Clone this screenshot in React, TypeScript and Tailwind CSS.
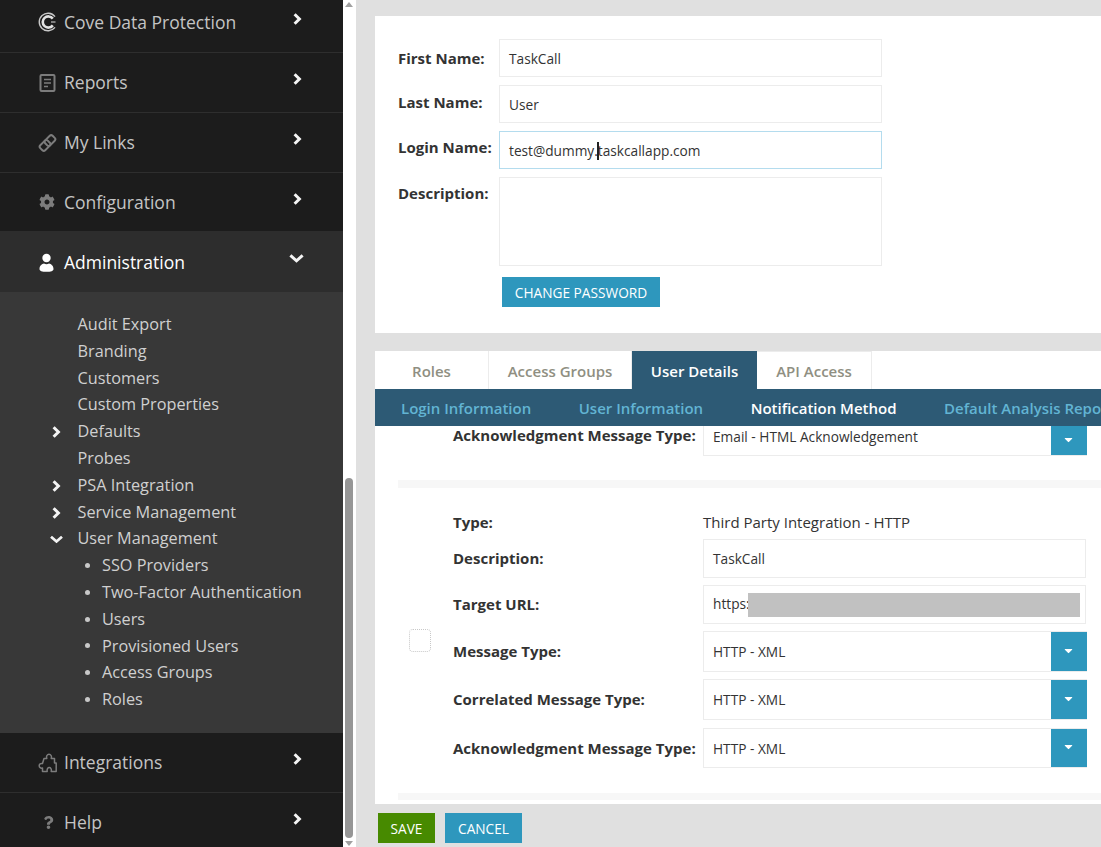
import { FaCog, FaCaretDown, FaQuestion } from 'react-icons/fa'
import type { ReactNode } from 'react'

const CoveIcon = () => (
  <svg width="20" height="20" viewBox="0 0 20 20" fill="none" stroke="#c8c8c8">
    <path d="M17 4.6 A8.8 8.8 0 1 0 17 15.4" strokeWidth="1.4" />
    <path d="M14.8 6.6 A5.6 5.6 0 1 0 14.8 13.4" strokeWidth="2.6" stroke="#e2e2e2" />
    <path d="M13 10 H17.5" strokeWidth="1.4" stroke="#a8a8a8" />
  </svg>
)

const ReportIcon = () => (
  <svg width="20" height="20" viewBox="0 0 20 20" fill="none">
    <rect x="2.5" y="2" width="14" height="16" rx="1" stroke="#7c7c7c" strokeWidth="2" />
    <path d="M6 6.5 H13 M6 10 H13 M6 13.5 H10" stroke="#7c7c7c" strokeWidth="1.5" />
  </svg>
)

const LinkIcon = () => (
  <svg width="20" height="20" viewBox="0 0 20 20" fill="none" stroke="#7c7c7c" strokeWidth="2">
    <g transform="rotate(-45 9.5 10)">
      <rect x="0.8" y="6.5" width="10.5" height="7" rx="2" />
      <rect x="7.7" y="6.5" width="10.5" height="7" rx="2" />
    </g>
  </svg>
)

const UserIcon = () => (
  <svg width="18" height="20" viewBox="0 0 18 20" fill="#ffffff">
    <circle cx="8.5" cy="5" r="4.2" />
    <path d="M1.5 16 C1.5 12.5 4 11 6 10.5 C7.5 11.5 9.5 11.5 11 10.5 C13 11 15.5 12.5 15.5 16 C15.5 18 13 18.8 8.5 18.8 C4 18.8 1.5 18 1.5 16 Z" />
  </svg>
)

const PuzzleIcon = () => (
  <svg width="20" height="20" viewBox="0 0 20 20" fill="none" stroke="#7c7c7c" strokeWidth="1.5">
    <path d="M6 5.5 H8.8 C8 3.2 9.2 1.2 11 1.2 C12.8 1.2 14 3.2 13.2 5.5 H16.5 V10 H18.2 V18.5 H13.2 C13.8 15.8 12.6 14.6 11.2 14.6 C9.8 14.6 8.8 15.8 9.2 18.5 H4.5 V15 C2.6 15.6 1.2 14.4 1.2 12.8 C1.2 11.2 2.6 10 4.5 10.5 L6 5.5 Z" strokeLinejoin="round" />
  </svg>
)

const ChevronRight = ({ className }: { className: string }) => (
  <svg width="9" height="12" viewBox="0 0 9 12" fill="none" stroke="#f4f4f4" strokeWidth="3" className={className}>
    <path d="M1.6 1.2 L6.4 6 L1.6 10.8" />
  </svg>
)

const ChevronDown = ({ className }: { className: string }) => (
  <svg width="15" height="9" viewBox="0 0 15 9" fill="none" stroke="#f4f4f4" strokeWidth="3" className={className}>
    <path d="M1.4 1.4 L7.5 6.8 L13.6 1.4" />
  </svg>
)

type RowProps = { icon: ReactNode; label: string; className: string }

const NavRow = ({ icon, label, className }: RowProps) => (
  <div className={`flex items-center pl-[38px] pr-[41px] border-b border-[#2e2e2e] text-[17.5px] text-[#c4c4c4] ${className}`}>
    <span className="w-[26px] flex items-center">{icon}</span>
    <span className="flex-1">{label}</span>
    <ChevronRight className="-mt-[7px]" />
  </div>
)

const SubItem = ({ label, arrow }: { label: string; arrow?: 'right' | 'down' }) => (
  <div className="flex items-center h-[26.8px] text-[16.25px] text-[#d0d0d0]">
    <span className="w-[77.5px] flex pl-[50px]">
      {arrow === 'right' && <ChevronRight className="ml-[2px] mt-[2px]" />}
      {arrow === 'down' && <ChevronDown className="-ml-[1px] mt-[2px] scale-90" />}
    </span>
    {label}
  </div>
)

const Bullet = ({ label }: { label: string }) => (
  <div className="flex items-center h-[26.8px] pl-[85px] text-[16.25px] text-[#d0d0d0]">
    <span className="w-[5px] h-[5px] rounded-full bg-[#c8c8c8] mr-[12px]" />
    {label}
  </div>
)

const TextBox = ({ value, className }: { value: string; className: string }) => (
  <div className={`flex items-center pl-[9px] pt-[2px] border border-[#ececec] bg-white text-[13.7px] text-[#333333] ${className}`}>
    {value}
  </div>
)

const Select = ({ value, className }: { value: string; className: string }) => (
  <div className={`relative flex items-center w-[384px] pl-[9px] pt-[2px] border border-[#ececec] bg-white text-[13.7px] text-[#333333] ${className}`}>
    {value}
    <span className="absolute -right-[1px] top-0 bottom-0 w-[36px] bg-[#2e97bd] flex items-center justify-center">
      <FaCaretDown size={13} className="text-white -mt-[3px] -ml-[2px]" />
    </span>
  </div>
)

const FormRow = ({ label, children, className }: { label: string; children: ReactNode; className: string }) => (
  <div className={`flex items-center ${className}`}>
    <span className="w-[250px] font-bold text-[15px] text-[#333333] whitespace-nowrap">{label}</span>
    {children}
  </div>
)

export default function App() {
  return (
    <div className="flex h-[847px] w-[1101px] overflow-hidden bg-[#e0e0e0] font-['Open_Sans',sans-serif]">
      <div className="w-[343px] shrink-0 flex flex-col bg-[#1c1c1c]">
        <NavRow icon={<CoveIcon />} label="Cove Data Protection" className="h-[53px] pb-[8px]" />
        <NavRow icon={<ReportIcon />} label="Reports" className="h-[60px]" />
        <NavRow icon={<LinkIcon />} label="My Links" className="h-[60px]" />
        <NavRow icon={<FaCog size={16} className="text-[#7c7c7c] ml-[1px]" />} label="Configuration" className="h-[58px] border-b-0" />
        <div className="h-[61px] flex items-center pl-[38px] pr-[39px] bg-[#2d2d2d] text-[17.5px] text-white pt-[2px]">
          <span className="w-[26px] flex items-center"><UserIcon /></span>
          <span className="flex-1">Administration</span>
          <ChevronDown className="-mt-[9px]" />
        </div>
        <div className="h-[441px] bg-[#383838] pt-[18.9px]">
          <SubItem label="Audit Export" />
          <SubItem label="Branding" />
          <SubItem label="Customers" />
          <SubItem label="Custom Properties" />
          <SubItem label="Defaults" arrow="right" />
          <SubItem label="Probes" />
          <SubItem label="PSA Integration" arrow="right" />
          <SubItem label="Service Management" arrow="right" />
          <SubItem label="User Management" arrow="down" />
          <Bullet label="SSO Providers" />
          <Bullet label="Two-Factor Authentication" />
          <Bullet label="Users" />
          <Bullet label="Provisioned Users" />
          <Bullet label="Access Groups" />
          <Bullet label="Roles" />
        </div>
        <NavRow icon={<PuzzleIcon />} label="Integrations" className="h-[60px]" />
        <NavRow icon={<FaQuestion size={13} className="text-[#7c7c7c] ml-[4px]" />} label="Help" className="flex-1 border-b-0 pt-[5px]" />
      </div>

      <div className="relative w-[13px] shrink-0 bg-white">
        <span className="absolute left-[2px] top-[2px] w-0 h-0 border-x-[4px] border-x-transparent border-b-[5px] border-b-[#a0a0a0]" />
        <span className="absolute left-[2px] top-[478px] w-[8px] h-[360px] rounded-[4px] bg-[#969696]" />
        <span className="absolute left-[2px] bottom-[1px] w-0 h-0 border-x-[4px] border-x-transparent border-t-[5px] border-t-[#a0a0a0]" />
      </div>

      <div className="flex-1 min-w-0 pl-[19px] pt-[16px] flex flex-col">
        <div className="h-[317px] bg-white pt-[23px] pl-[23px] shrink-0">
          <div className="flex items-center h-[38px] mb-[8px]">
            <span className="w-[101px] font-bold text-[15px] text-[#333333]">First Name:</span>
            <TextBox value="TaskCall" className="w-[383px] h-[38px]" />
          </div>
          <div className="flex h-[38px] mb-[8px]">
            <span className="w-[101px] font-bold text-[15px] text-[#333333] pt-[6px]">Last Name:</span>
            <TextBox value="User" className="w-[383px] h-[38px]" />
          </div>
          <div className="flex h-[38px] mb-[8px]">
            <span className="w-[101px] font-bold text-[15px] text-[#333333] pt-[5px]">Login Name:</span>
            <div className="relative w-[383px] h-[38px] flex items-center pl-[9px] pt-[2px] border border-[#b4dcee] text-[13.7px] text-[#333333]">
              test@dummy.taskcallapp.com
              <span className="absolute left-[97px] top-[10px] w-[2px] h-[18px] bg-[#222222]" />
            </div>
          </div>
          <div className="flex h-[89px]">
            <span className="w-[101px] font-bold text-[15px] text-[#333333] pt-[5px]">Description:</span>
            <div className="w-[383px] border border-[#ececec]" />
          </div>
          <button className="block ml-[104px] mt-[11px] w-[158px] h-[30px] pt-[2px] bg-[#2e97bd] text-white text-[13.7px]">CHANGE PASSWORD</button>
        </div>

        <div className="h-[18px] shrink-0" />

        <div className="h-[38px] shrink-0 bg-white flex text-[15px] font-semibold text-[#8f8f82]">
          <div className="w-[114px] border-r border-[#ececec] flex items-center justify-center pt-[2px]">Roles</div>
          <div className="w-[143px] border-r border-[#ececec] flex items-center justify-center pt-[2px]">Access Groups</div>
          <div className="w-[125px] bg-[#2d5a75] text-white flex items-center justify-center pt-[2px]">User Details</div>
          <div className="w-[115px] border-r border-t border-[#ececec] flex items-center justify-center pt-[1px]">API Access</div>
        </div>
        <div className="h-[37px] shrink-0 bg-[#2d5a75] flex items-center gap-[47.5px] pl-[26px] pt-[2px] text-[15px] font-semibold text-[#62b4d3] whitespace-nowrap overflow-hidden">
          <span>Login Information</span>
          <span>User Information</span>
          <span className="text-white">Notification Method</span>
          <span>Default Analysis Reports</span>
        </div>

        <div className="h-[378px] shrink-0 bg-white overflow-hidden pl-[23px]">
          <div className="flex items-start h-[30px]">
            <span className="w-[55px]" />
            <span className="w-[250px] font-bold text-[15px] text-[#333333] whitespace-nowrap -mt-[2px]">Acknowledgment Message Type:</span>
            <Select value="Email - HTML Acknowledgement" className="h-[30px] pb-[9px] border-t-0" />
          </div>
          <div className="h-[8px] mt-[24px] bg-[#f7f7f7]" />
          <div className="flex">
            <div className="w-[55px] pl-[11px] pt-[141px]">
              <span className="block w-[22px] h-[23px] rounded-[4px] border border-dotted border-[#c8c8c8]" />
            </div>
            <div className="pt-[23px]">
              <FormRow label="Type:" className="h-[22px] mb-[6px]">
                <span className="text-[15px] text-[#333333]">Third Party Integration - HTTP</span>
              </FormRow>
              <FormRow label="Description:" className="h-[39px] mb-[7px]">
                <TextBox value="TaskCall" className="w-[383px] h-[39px]" />
              </FormRow>
              <FormRow label="Target URL:" className="h-[39px] mb-[7px]">
                <div className="relative w-[383px] h-[39px] flex items-center pl-[9px] border border-[#ececec] text-[13.7px] text-[#333333]">
                  https:
                  <span className="absolute left-[44px] top-[7px] w-[332px] h-[24px] bg-[#c1c1c1]" />
                </div>
              </FormRow>
              <FormRow label="Message Type:" className="h-[41px] mb-[7px]">
                <Select value="HTTP - XML" className="h-[41px]" />
              </FormRow>
              <FormRow label="Correlated Message Type:" className="h-[41px] mb-[8px]">
                <Select value="HTTP - XML" className="h-[41px]" />
              </FormRow>
              <FormRow label="Acknowledgment Message Type:" className="h-[40px]">
                <Select value="HTTP - XML" className="h-[40px]" />
              </FormRow>
            </div>
          </div>
          <div className="h-[7px] mt-[25px] bg-[#f7f7f7]" />
        </div>

        <div className="flex gap-[10px] pl-[3px] pt-[9px]">
          <button className="w-[57px] h-[30px] pt-[3px] bg-[#478a00] text-white text-[13.7px]">SAVE</button>
          <button className="w-[77px] h-[30px] pt-[3px] bg-[#2e97bd] text-white text-[13.7px]">CANCEL</button>
        </div>
      </div>
    </div>
  )
}
